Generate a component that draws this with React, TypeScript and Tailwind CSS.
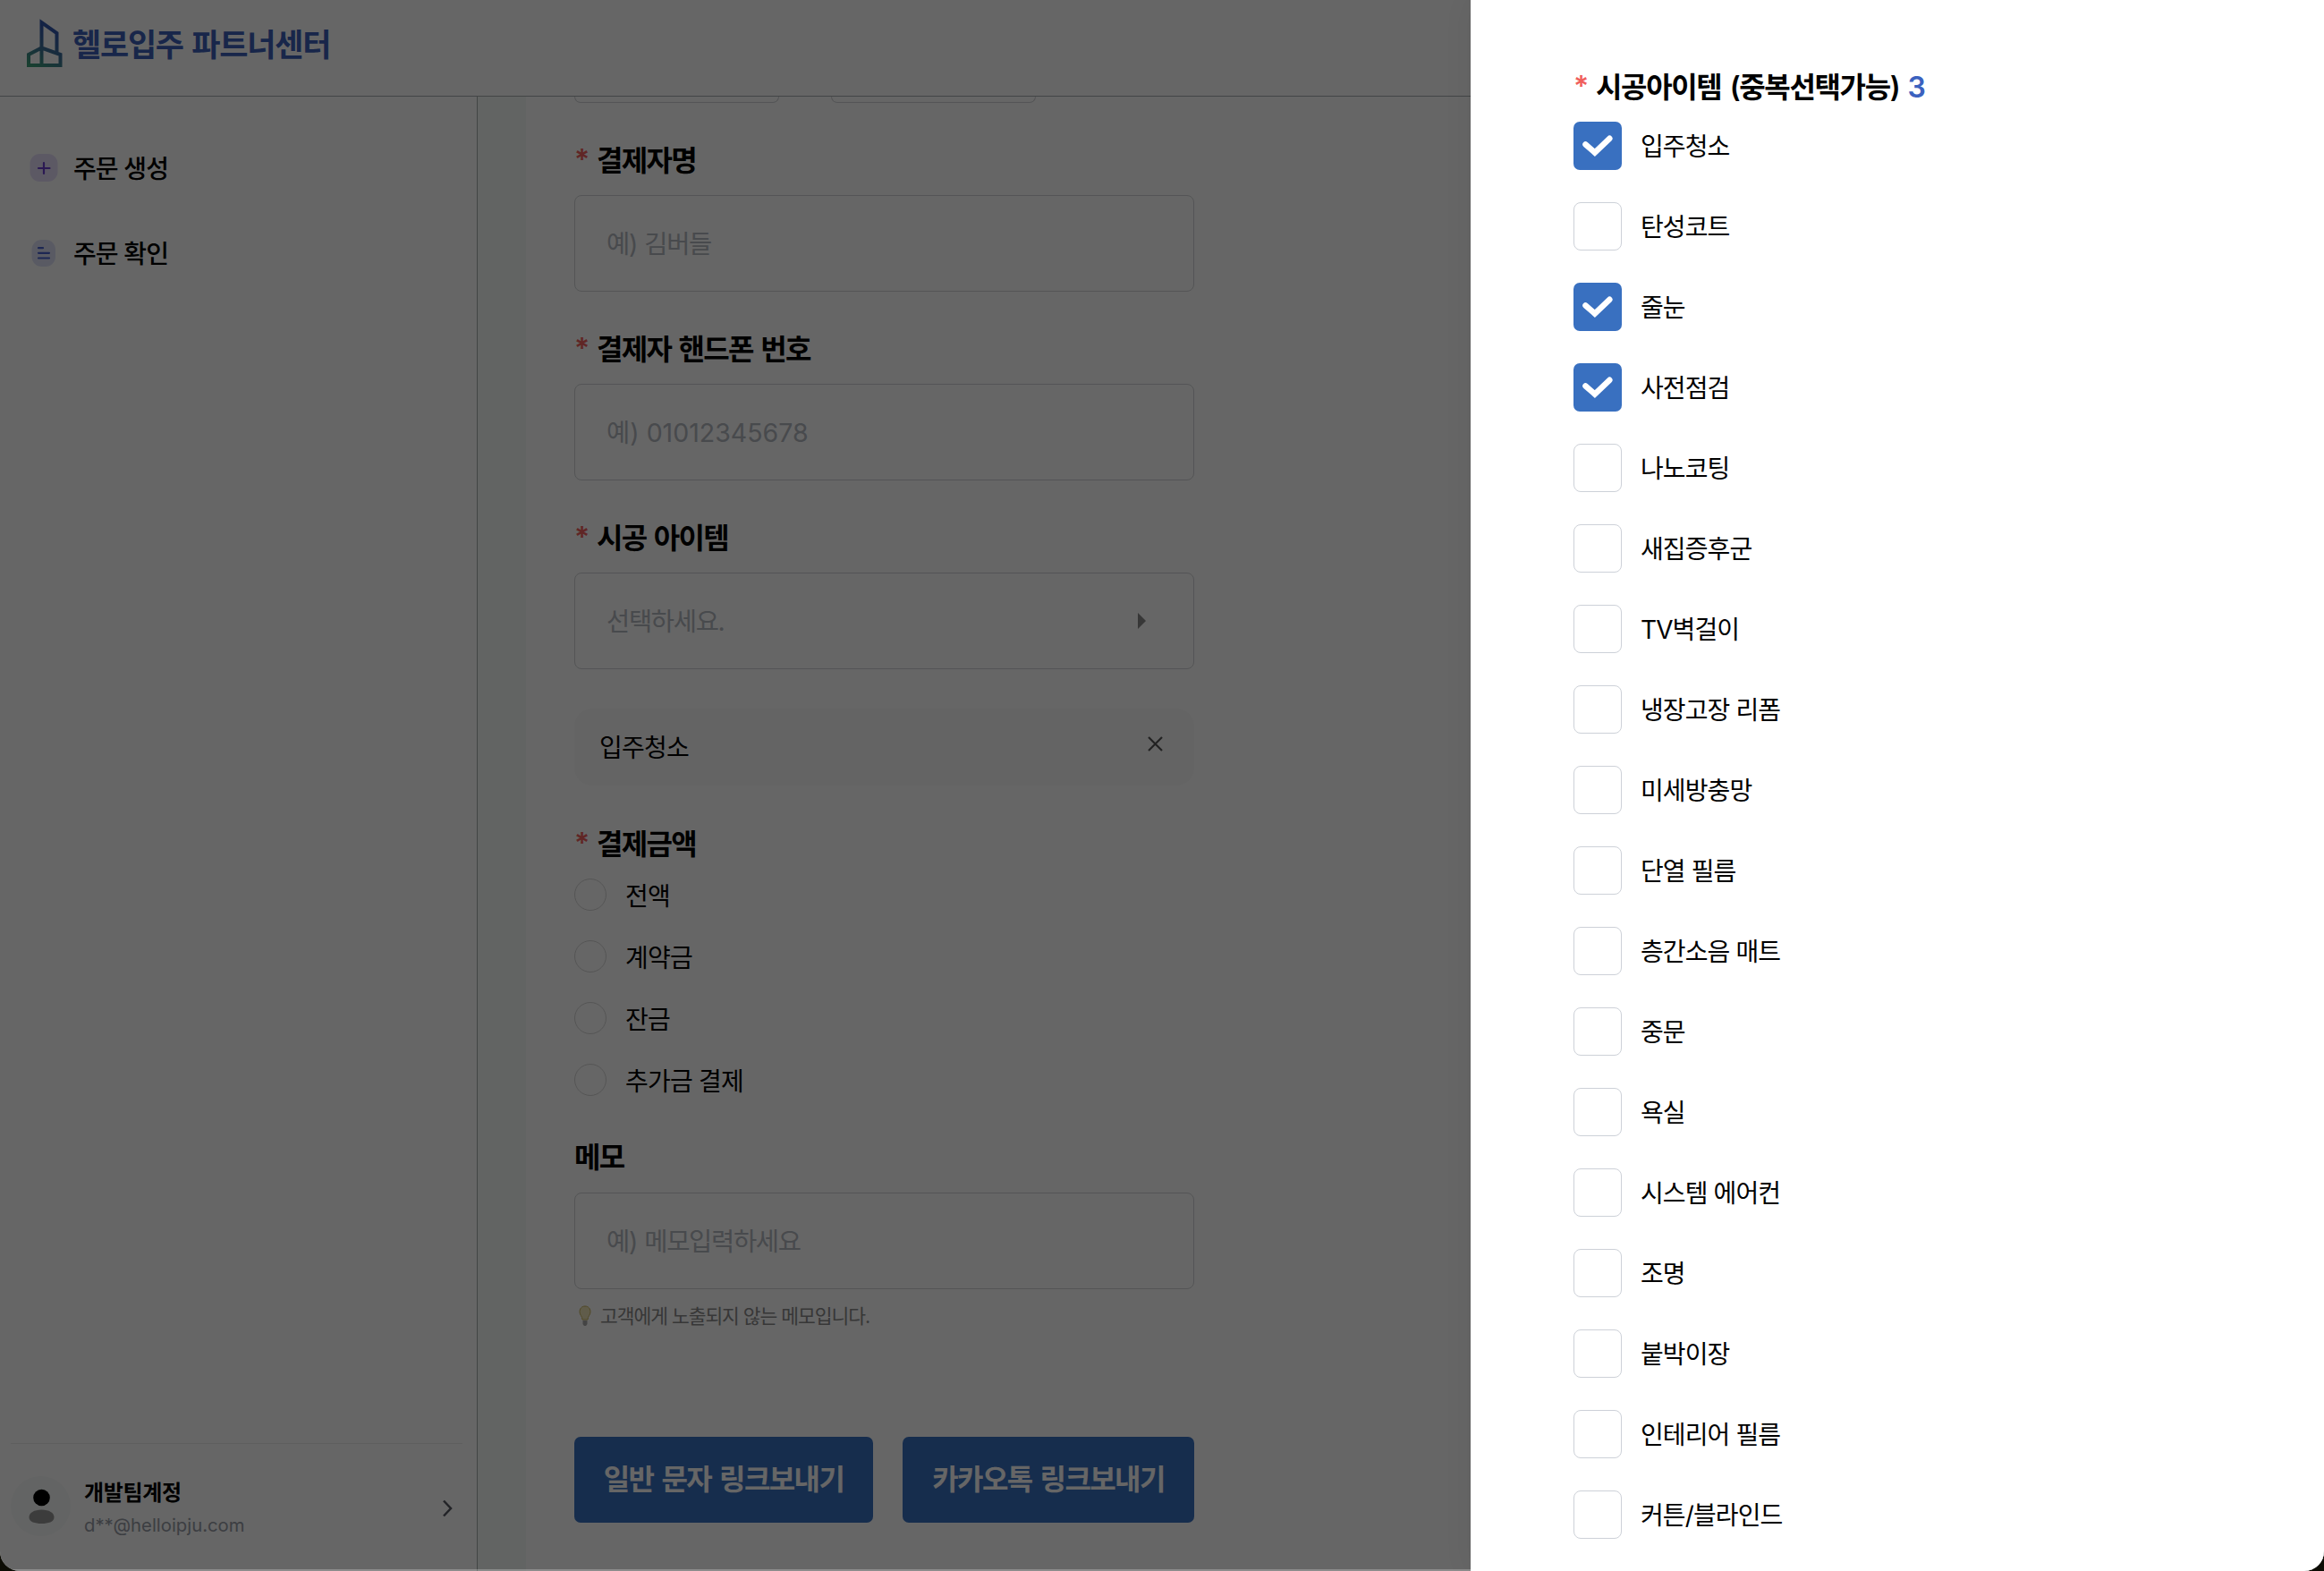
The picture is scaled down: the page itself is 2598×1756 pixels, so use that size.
import React from "react";

const items = [
  { name: "입주청소", checked: true },
  { name: "탄성코트", checked: false },
  { name: "줄눈", checked: true },
  { name: "사전점검", checked: true },
  { name: "나노코팅", checked: false },
  { name: "새집증후군", checked: false },
  { name: "TV벽걸이", checked: false },
  { name: "냉장고장 리폼", checked: false },
  { name: "미세방충망", checked: false },
  { name: "단열 필름", checked: false },
  { name: "층간소음 매트", checked: false },
  { name: "중문", checked: false },
  { name: "욕실", checked: false },
  { name: "시스템 에어컨", checked: false },
  { name: "조명", checked: false },
  { name: "붙박이장", checked: false },
  { name: "인테리어 필름", checked: false },
  { name: "커튼/블라인드", checked: false },
];

const payments = ["전액", "계약금", "잔금", "추가금 결제"];

function Logo() {
  return (
    <svg width="40" height="54" viewBox="0 0 40 54" fill="none" className="shrink-0">
      <defs>
        <linearGradient id="logo" x1="4" y1="52" x2="26" y2="12" gradientUnits="userSpaceOnUse">
          <stop offset="0" stopColor="#3f9f78" />
          <stop offset="0.5" stopColor="#3d7098" />
          <stop offset="1" stopColor="#3458ac" />
        </linearGradient>
      </defs>
      <path
        d="M16.500 52V4L33.500 16V38.500M2 52V40L16.500 32.500L37.500 40V52ZM16.500 32.500V52"
        stroke="url(#logo)"
        strokeWidth="4"
      />
    </svg>
  );
}

function Label({
  children,
  required = true,
  className = "tracking-[-1.7px] [word-spacing:2px]",
}: {
  children: React.ReactNode;
  required?: boolean;
  className?: string;
}) {
  return (
    <div className="flex h-12 items-center text-[32px] font-semibold leading-[48px] text-black">
      {required && <span className="w-[25px] shrink-0 text-[#f0605c]">*</span>}
      <span className={`whitespace-pre pt-px ${className}`}>{children}</span>
    </div>
  );
}

function Field({
  placeholder,
  arrow = false,
  className = "tracking-[-1.3px] [word-spacing:1.5px]",
}: {
  placeholder: string;
  arrow?: boolean;
  className?: string;
}) {
  return (
    <div className="flex h-[108px] w-[693px] items-center justify-between rounded-[8px] border border-[#d1d3d6] pl-[35px] pr-[53px] text-[28.5px] text-[#b4b8c0]">
      <span className={`pt-[3px] ${className}`}>{placeholder}</span>
      {arrow && (
        <svg width="9" height="18" viewBox="0 0 9 18">
          <path d="M0 0L9 9L0 18Z" fill="#8a8a8a" />
        </svg>
      )}
    </div>
  );
}

function Sidebar() {
  return (
    <aside className="flex w-[534px] shrink-0 flex-col justify-between border-r border-[#a8aeac] pl-3 pr-4">
      <nav className="flex flex-col pt-[56px] pl-[21px] text-[28px] font-medium leading-[48px] tracking-[-0.9px]">
        <a className="flex h-12 items-center">
          <svg width="32" height="32" viewBox="0 0 32 32" className="mr-[17px]">
            <rect x="0.500" width="31" height="31" rx="11" fill="#e6dffa" />
            <path d="M10 16H22.500M16 10V22" stroke="#6b3fd0" strokeWidth="2.200" strokeLinecap="round" />
          </svg>
          <span className="pt-px">주문 생성</span>
        </a>
        <a className="mt-[47px] flex h-12 items-center">
          <svg width="32" height="32" viewBox="0 0 32 32" className="mr-[17px]">
            <rect x="2.500" y="1" width="26.500" height="30" rx="11" fill="#dfe2f8" />
            <path d="M10 10.200H15M10 15.800H22M10 21.500H22" stroke="#4a62d0" strokeWidth="2.200" strokeLinecap="round" />
          </svg>
          <span className="pt-px">주문 확인</span>
        </a>
      </nav>
      <div className="flex h-[143px] border-t border-[#ebebeb]">
        <div className="mt-[36px] flex h-[67px] w-[67px] items-center justify-center rounded-full bg-[#f7faf9]">
          <svg width="30" height="40" viewBox="0 0 30 40">
            <ellipse cx="15.500" cy="10" rx="9.300" ry="9.300" fill="#000" />
            <path d="M1.500 32C1.500 27 7 23.500 15.500 23.500S29.500 27 29.500 32C29.500 37 23 39 15.500 39S1.500 37 1.500 32Z" fill="#969696" />
          </svg>
        </div>
        <div className="mt-[37px] ml-[15px] flex-1">
          <div className="text-[24px] font-semibold leading-9 tracking-[-0.3px]">개발팀계정</div>
          <div className="text-[20.300px] leading-9 text-[#969ba5]">d**@helloipju.com</div>
        </div>
        <svg width="14" height="22" viewBox="0 0 14 22" fill="none" className="mt-[61px] mr-[10px]">
          <path d="M3 2.500L11 11L3 19.500" stroke="#555862" strokeWidth="2.500" />
        </svg>
      </div>
    </aside>
  );
}

function OrderForm() {
  return (
    <main className="min-w-0 flex-1 overflow-hidden bg-[#f6fbf8] pl-[54px]">
      <div className="h-full bg-white pl-[54px]">
        <div className="flex h-[7px] gap-[58px]">
          <div className="h-full w-[229px] rounded-b-[8px] border border-t-0 border-[#d1d3d6]" />
          <div className="h-full w-[229px] rounded-b-[8px] border border-t-0 border-[#d1d3d6]" />
        </div>
        <div className="pt-[40px]">
          <Label>결제자명</Label>
          <div className="h-[15px]" />
          <Field placeholder="예) 김버들" />
        </div>
        <div className="pt-[40px]">
          <Label>결제자 핸드폰 번호</Label>
          <div className="h-[15px]" />
          <Field placeholder="예) 01012345678" className="tracking-[0px]" />
        </div>
        <div className="pt-[40px]">
          <Label>시공 아이템</Label>
          <div className="h-[15px]" />
          <Field placeholder="선택하세요." arrow />
        </div>
        <div className="mt-11 flex h-[86px] w-[693px] items-center justify-between rounded-[20px] bg-[#fafafa] pl-[28px] pr-[35px] text-[28px] tracking-[-0.8px]">
          <span className="pt-[2px]">입주청소</span>
          <svg width="17" height="17" viewBox="0 0 17 17" className="-mt-2">
            <path d="M1 1L16 16M16 1L1 16" stroke="#555" strokeWidth="2.200" />
          </svg>
        </div>
        <div className="pt-[41px]">
          <Label>결제금액</Label>
          <div className="mt-[15px] flex flex-col gap-[33px]">
            {payments.map((p) => (
              <label key={p} className="flex h-9 items-center text-[28px] tracking-[-0.8px]">
                <span className="mr-[21px] h-9 w-9 rounded-full border border-[#d4d4d4]" />
                <span className="pt-[3px]">{p}</span>
              </label>
            ))}
          </div>
        </div>
        <div className="pt-[44px]">
          <Label required={false}>메모</Label>
          <div className="h-[16px]" />
          <Field placeholder="예) 메모입력하세요" />
          <div className="mt-[12px] flex h-9 items-center text-[21.500px] tracking-[-1.050px] text-[#8a8a8a]">
            <svg width="15" height="24" viewBox="0 0 15 24" className="ml-[5px] mr-[9px]">
              <path d="M7 1C3 1 1 4 1 7.500C1 11 4 12 4 16H10C10 12 13 11 13 7.500C13 4 11 1 7 1Z" fill="#f0e6b8" stroke="#c8b45c" />
              <path d="M4.500 17H9.500V21L8 23H6L4.500 21Z" fill="#aaa" />
            </svg>
            <span>고객에게 노출되지 않는 메모입니다.</span>
          </div>
        </div>
        <div className="mt-[117px] flex gap-[33px] text-[32px] font-semibold text-white">
          <button className="h-24 w-[334px] rounded-[7px] bg-[#3970c0] tracking-[-1.6px] [word-spacing:2.5px]">일반 문자 링크보내기</button>
          <button className="h-24 w-[326px] rounded-[7px] bg-[#3970c0] tracking-[-1.6px] [word-spacing:2.5px]">카카오톡 링크보내기</button>
        </div>
      </div>
    </main>
  );
}

function ItemDrawer() {
  return (
    <section className="absolute top-0 right-0 h-full w-[954px] bg-white pt-[73px] pl-[115px] shadow-[0_0_32px_rgba(0,0,0,0.06)]">
      <Label className="tracking-[-1.350px] [word-spacing:2.500px]">
        시공아이템 (중복선택가능) <span className="text-[#3b62bf]">3</span>
      </Label>
      <div className="mt-[15px] flex flex-col gap-9">
        {items.map((item) => (
          <label key={item.name} className="flex h-[54px] items-center text-[28px] tracking-[-0.9px] text-black">
            {item.checked ? (
              <span className="mr-[21px] flex h-[54px] w-[54px] items-center justify-center rounded-[7px] bg-[#3970c0]">
                <svg width="34" height="24" viewBox="0 0 34 24" fill="none">
                  <path d="M3.500 10.500L13.800 19.500L30.300 3.800" stroke="#fff" strokeWidth="6.500" strokeLinecap="round" />
                </svg>
              </span>
            ) : (
              <span className="mr-[21px] h-[54px] w-[54px] rounded-[8px] border border-[#cdd1d8]" />
            )}
            <span className="pt-px">{item.name}</span>
          </label>
        ))}
      </div>
    </section>
  );
}

export default function App() {
  return (
    <div className="h-[1756px] w-[2598px] bg-[#0c0c04]">
      <div className="relative flex h-full flex-col overflow-hidden rounded-b-[22px] bg-white font-['Inter','Noto_Sans_CJK_KR',sans-serif] text-black">
        <header className="flex h-[108px] shrink-0 items-start border-b border-[#a8adb0] pl-[30px] pt-[21px]">
          <Logo />
          <h1 className="ml-[11px] mt-[2px] text-[35px] font-bold leading-[54px] tracking-[-1.250px] text-[#3c60b8] [word-spacing:2.500px]">헬로입주 파트너센터</h1>
        </header>
        <div className="flex min-h-0 flex-1">
          <Sidebar />
          <OrderForm />
        </div>
        <div className="absolute inset-0 border-b-2 border-[#ffffff40] bg-black/60" />
        <ItemDrawer />
      </div>
    </div>
  );
}
